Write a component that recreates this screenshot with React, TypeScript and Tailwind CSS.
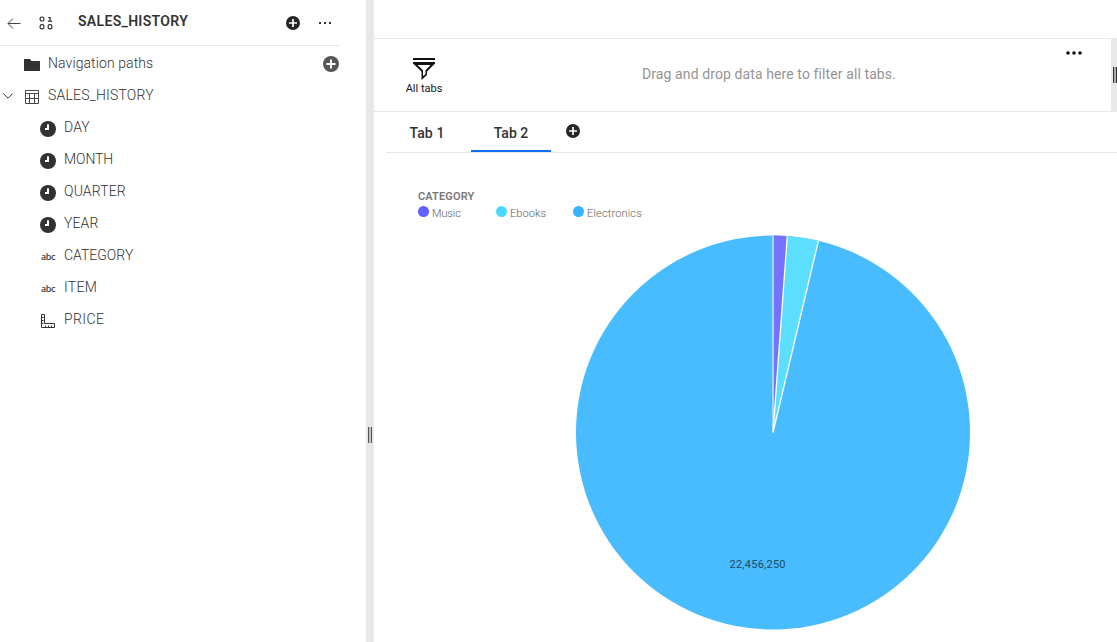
import React from "react";

function PlusCircle({ size, className }: { size: number; className: string }) {
  return (
    <svg width={size} height={size} viewBox="0 0 14 14" className={className}>
      <circle cx="7" cy="7" r="7" fill="currentColor" />
      <path d="M7 3v8M3 7h8" stroke="#fff" strokeWidth="1.7" />
    </svg>
  );
}

function ClockIcon() {
  return (
    <svg width="16" height="16" viewBox="0 0 16 16">
      <circle cx="8" cy="8" r="8" fill="#323232" />
      <path d="M8 3.2V8H5" fill="none" stroke="#fff" strokeWidth="2" />
    </svg>
  );
}

function AbcIcon() {
  return (
    <span className="block w-4 text-center font-['Noto_Sans'] text-[9px] leading-4 font-medium tracking-[-0.3px] text-[#323232]">
      abc
    </span>
  );
}

function RulerIcon() {
  return (
    <svg width="16" height="16" viewBox="0 0 16 16" fill="none" stroke="#323232">
      <path d="M1.5 1.5h3v9h10v4h-13z" />
      <path d="M2 4.5h1.5M2 7.5h1.5M2 10.5h1.5M5.5 14v-1.5M8.5 14v-1.5M11.5 14v-1.5" />
    </svg>
  );
}

const fields = [
  { name: "DAY", icon: <ClockIcon />, tracking: "tracking-[0.1px]" },
  { name: "MONTH", icon: <ClockIcon />, tracking: "tracking-[-0.1px]" },
  { name: "QUARTER", icon: <ClockIcon />, tracking: "tracking-[0.15px]" },
  { name: "YEAR", icon: <ClockIcon />, tracking: "tracking-[0.1px]" },
  { name: "CATEGORY", icon: <AbcIcon />, tracking: "tracking-[0]" },
  { name: "ITEM", icon: <AbcIcon />, tracking: "tracking-[0.3px]" },
  { name: "PRICE", icon: <RulerIcon />, tracking: "tracking-[0.4px]" },
];

function Sidebar() {
  return (
    <aside className="w-[366px] shrink-0 text-[#323232]">
      <header className="flex h-[46px] w-[341px] items-center border-b border-[#e8e8e8] pl-[7px]">
        <svg width="14" height="12" viewBox="0 0 14 12" fill="none" stroke="#444">
          <path d="M13.5 6.5H1M6 1.5l-5 5 5 5" />
        </svg>
        <svg width="16" height="14" viewBox="0 0 16 14" className="ml-[18px]" fill="none" stroke="#323232" strokeWidth="1.2">
          <rect x="1.1" y="1" width="3.8" height="4" rx="1.6" />
          <rect x="1.1" y="8.6" width="3.8" height="4.2" rx="1.6" />
          <rect x="9.1" y="8.6" width="3.8" height="4.2" rx="1.6" />
          <path d="M9.3 1.6h1.8v3.8M9 5.2h4.2" />
        </svg>
        <h1 className="ml-[23px] w-[208px] pb-[3px] text-sm leading-5 font-semibold tracking-[0.33px]">SALES_HISTORY</h1>
        <PlusCircle size={14} className="text-[#262626]" />
        <svg width="14" height="4" viewBox="0 0 14 4" className="ml-[18px]" fill="#323232">
          <path d="M1 1h2v2H1zM6 1h2v2H6zM11 1h2v2h-2z" />
        </svg>
      </header>
      <div className="flex h-8 items-center pt-1 pl-6">
        <svg width="16" height="12" viewBox="0 0 16 12" className="mt-px" fill="#323232">
          <path d="M0 0h6l1.5 2H16v10H0z" />
        </svg>
        <span className="ml-2 w-[275px] pb-[3px] text-sm leading-5 font-light tracking-[0.1px]">Navigation paths</span>
        <PlusCircle size={16} className="text-[#565656]" />
      </div>
      <div className="flex h-8 items-center pt-1 pl-[3px]">
        <svg width="10" height="6" viewBox="0 0 10 6" fill="none" stroke="#323232">
          <path d="M.3.5L5 5.2 9.7.5" />
        </svg>
        <svg width="14" height="14" viewBox="0 0 14 14" className="mt-0.5 ml-3" fill="none" stroke="#444">
          <path d="M.5.5h13v13H.5zM1 3.5h12M1 8.5h12M4.5 4v9M9.5 4v9" />
        </svg>
        <span className="ml-[9px] pb-[3px] text-sm leading-5 font-light tracking-[0.2px]">SALES_HISTORY</span>
      </div>
      <ul>
        {fields.map((f) => (
          <li key={f.name} className="flex h-8 items-center pt-1 pl-10">
            <span className="mt-px">{f.icon}</span>
            <span className={`ml-2 pb-[3px] text-sm leading-5 font-light ${f.tracking}`}>{f.name}</span>
          </li>
        ))}
      </ul>
    </aside>
  );
}

function Splitter() {
  return (
    <div className="flex w-2 shrink-0 items-center justify-center bg-[#e8e8e8] pt-[228px]">
      <div className="h-4 w-1 border-x border-[#505050] bg-[#c4c4c4]" />
    </div>
  );
}

function FilterBar() {
  return (
    <div className="flex h-[74px] border-y border-[#e8e8e8]">
      <div className="flex w-[100px] flex-col items-center pt-[19px]">
        <svg width="22" height="22" viewBox="0 0 22 22" fill="none" stroke="#111">
          <path d="M0 1h22" strokeWidth="2" />
          <path d="M0 4h22v1.5L14 13.5V17l-5.5 5v-8.5L0 5.5z" fill="#111" stroke="none" />
          <path d="M4.5 7h13l-5 5.2v4L10 18v-5.8z" fill="#fff" stroke="none" />
        </svg>
        <span className="mt-px text-[11px] leading-4 tracking-[0] text-[#161616]">All tabs</span>
      </div>
      <p className="flex-1 pt-[25px] pl-[168px] text-sm leading-5 tracking-[0.1px] text-[#949494]">
        Drag and drop data here to filter all tabs.
      </p>
      <svg width="16" height="4" viewBox="0 0 16 4" className="mt-3 mr-[29px]" fill="#111">
        <circle cx="2" cy="2" r="1.8" />
        <circle cx="8" cy="2" r="1.8" />
        <circle cx="14" cy="2" r="1.8" />
      </svg>
      <div className="flex w-1.5 items-center justify-end bg-[#e8e8e8]">
        <div className="h-4 w-1 border-x border-[#323232] bg-[#aaa]" />
      </div>
    </div>
  );
}

function Tabs() {
  return (
    <nav className="ml-3 flex h-[41px] border-b border-[#e8e8e8] text-sm font-medium text-[#323232]">
      <button className="w-[85px] pt-0.5 pr-[3px] tracking-[0.1px]">Tab 1</button>
      <button className="w-20 border-b-2 border-[#0f6fff] pt-1 tracking-[0]">Tab 2</button>
      <PlusCircle size={14} className="mt-3 ml-[15px] text-[#262626]" />
    </nav>
  );
}

function Legend() {
  return (
    <div className="pt-9 pl-11 text-[11px] font-light text-[#606060]">
      <div className="h-4 leading-4 font-semibold tracking-[0.12px] text-[#777]">CATEGORY</div>
      <div className="flex h-4 leading-[18px]">
        <div className="flex w-[78px] gap-[3px]">
          <i className="mt-px size-[11px] rounded-full bg-[#6460ff]" />
          <span className="tracking-[-0.1px]">Music</span>
        </div>
        <div className="flex w-[77px] gap-[3px]">
          <i className="mt-px size-[11px] rounded-full bg-[#49d8ff]" />
          <span className="tracking-[0.1px]">Ebooks</span>
        </div>
        <div className="flex gap-[3px]">
          <i className="mt-px size-[11px] rounded-full bg-[#35b4ff]" />
          <span className="tracking-[0.16px]">Electronics</span>
        </div>
      </div>
    </div>
  );
}

function PieChart() {
  return (
    <svg width="396" height="396" viewBox="0 0 396 396" className="mt-[13px] ml-[201px]">
      <circle cx="198" cy="198.5" r="197" fill="#48bcff" />
      <path d="M198 198.5L212.3 2A197 197 0 0 1 243.4 6.8z" fill="#5cdeff" />
      <path d="M198.5 184V1.5A197 197 0 0 1 212.3 2z" fill="#7472ff" />
      <path d="M198 1.5v197" stroke="#bfe5ff" strokeWidth="1.5" />
      <path d="M212.3 2L198 198.5L243.4 6.8" fill="none" stroke="#fff" strokeWidth="1.3" strokeLinejoin="bevel" />
      <text x="154.5" y="334" className="font-[Roboto] text-[11px] tracking-[0.25px]" fill="#1d4a66">22,456,250</text>
    </svg>
  );
}

export default function App() {
  return (
    <div className="flex h-[642px] w-[1117px] overflow-hidden bg-white font-['Roboto','Noto_Sans',sans-serif]">
      <Sidebar />
      <Splitter />
      <main className="min-w-0 flex-1">
        <div className="h-[38px]" />
        <FilterBar />
        <Tabs />
        <Legend />
        <PieChart />
      </main>
    </div>
  );
}
